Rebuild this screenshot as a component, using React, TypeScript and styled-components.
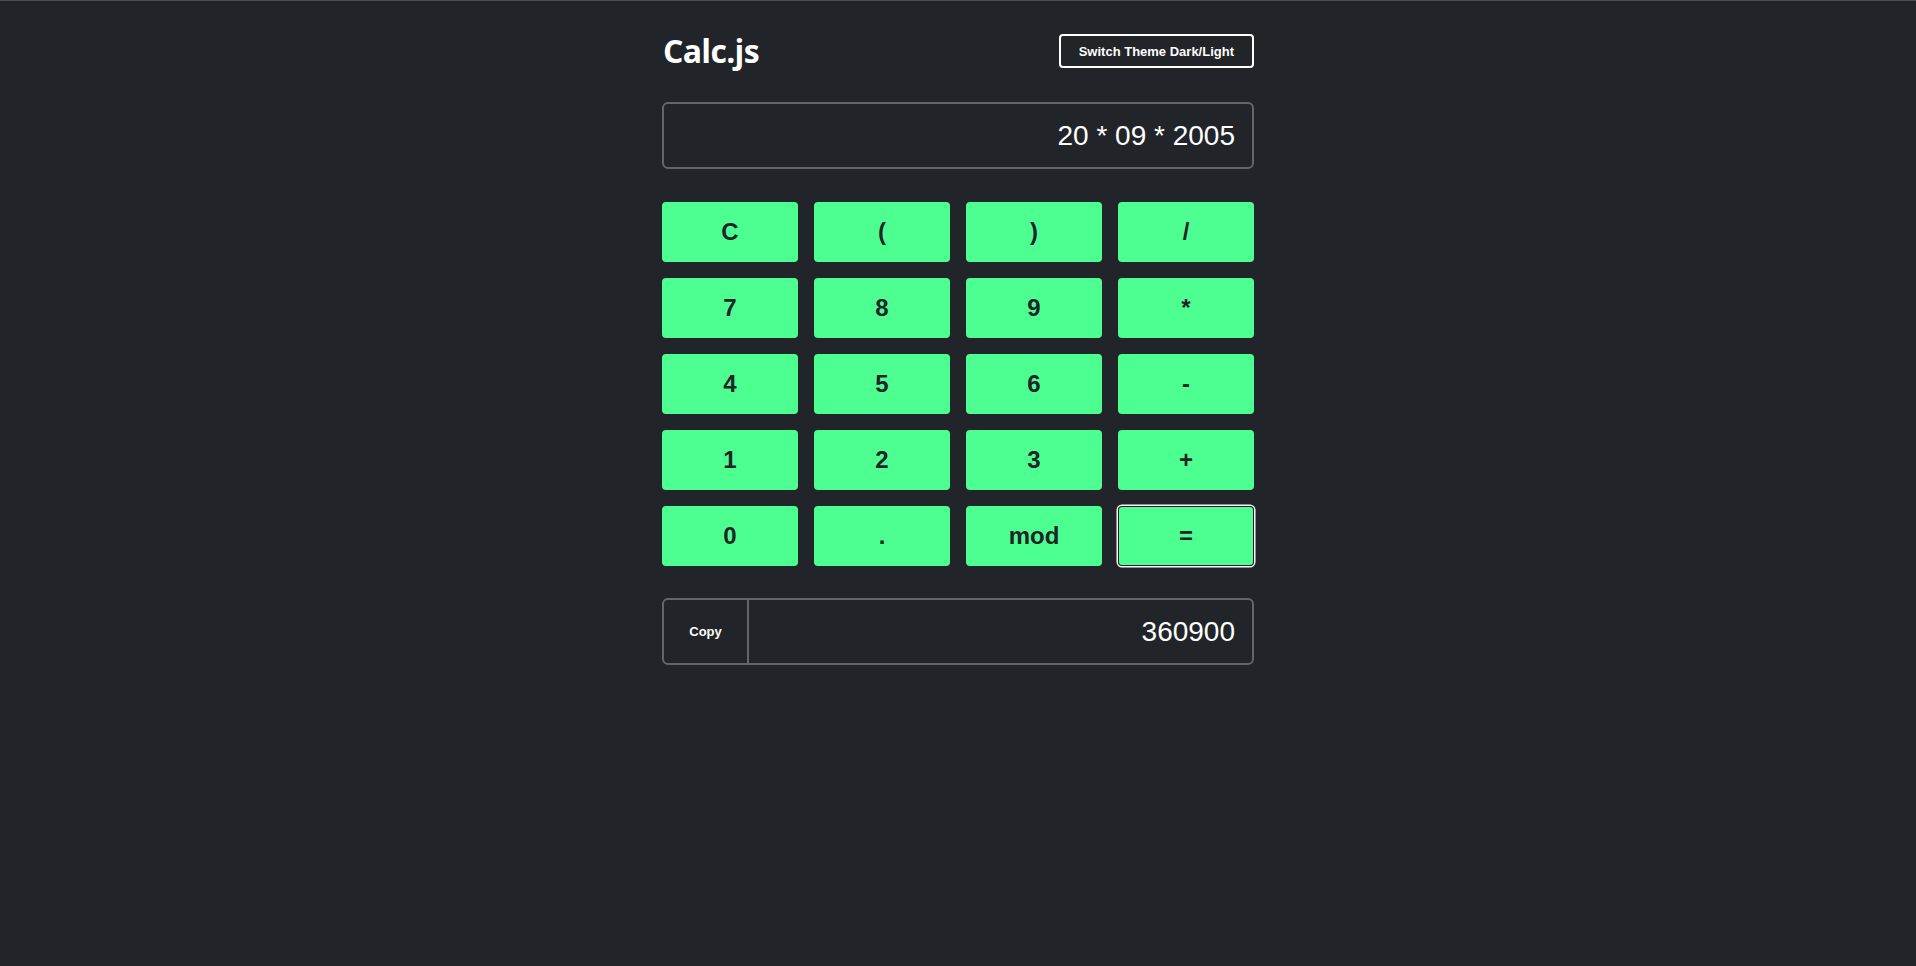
import React from "react";
import styled, { createGlobalStyle } from "styled-components";

const GlobalStyle = createGlobalStyle`
  html, body {
    margin: 0;
    padding: 0;
    background: #212428;
    min-height: 100vh;
  }
  body {
    border-top: 1px solid #4a4d51;
    box-sizing: border-box;
    font-family: "Liberation Sans", Arial, sans-serif;
  }
  * { box-sizing: border-box; }
`;

const Page = styled.main`
  display: flex;
  justify-content: center;
  min-height: calc(100vh - 1px);
`;

const Calculator = styled.div`
  width: 592px;
  padding-top: 33px;
  display: flex;
  flex-direction: column;
`;

const Header = styled.header`
  display: flex;
  justify-content: space-between;
  align-items: center;
  height: 34px;
`;

const Title = styled.h1`
  margin: 0 0 0 1px;
  font-family: "Open Sans", "Noto Sans", sans-serif;
  font-weight: 700;
  font-size: 32px;
  line-height: 34px;
  color: #ffffff;
  letter-spacing: -0.7px;
`;

const ThemeButton = styled.button`
  height: 34px;
  padding: 0 18px;
  border: 2px solid #ffffff;
  border-radius: 4px;
  background: transparent;
  color: #ffffff;
  font-family: "Liberation Sans", Arial, sans-serif;
  font-weight: 700;
  font-size: 13px;
  cursor: pointer;
`;

const Display = styled.div`
  margin-top: 34px;
  height: 67px;
  border: 2px solid #636568;
  border-radius: 6px;
  display: flex;
  align-items: center;
  justify-content: flex-end;
  padding: 0 17px;
  color: #ffffff;
  font-size: 28px;
`;

const Keypad = styled.div`
  margin-top: 33px;
  display: grid;
  grid-template-columns: repeat(4, 136px);
  grid-auto-rows: 60px;
  gap: 16px;
`;

const Key = styled.button<{ $focused?: boolean }>`
  border: none;
  border-radius: 4px;
  background: #4dff91;
  color: #212428;
  font-family: "Liberation Sans", Arial, sans-serif;
  font-weight: 700;
  font-size: 24px;
  cursor: pointer;
  ${(p) =>
    p.$focused
      ? `box-shadow: inset 0 0 0 1px #1c1e22, 0 0 0 1.5px #ffffff;`
      : ""}
`;

const Result = styled.div`
  margin-top: 32px;
  height: 67px;
  border: 2px solid #636568;
  border-radius: 6px;
  display: flex;
  align-items: stretch;
`;

const CopyButton = styled.button`
  width: 85px;
  border: none;
  border-right: 2px solid #636568;
  background: transparent;
  color: #ffffff;
  font-family: "Liberation Sans", Arial, sans-serif;
  font-weight: 700;
  font-size: 13px;
  cursor: pointer;
`;

const ResultValue = styled.div`
  flex: 1;
  display: flex;
  align-items: center;
  justify-content: flex-end;
  padding-right: 17px;
  color: #ffffff;
  font-size: 28px;
`;

const keys = [
  "C", "(", ")", "/",
  "7", "8", "9", "*",
  "4", "5", "6", "-",
  "1", "2", "3", "+",
  "0", ".", "mod", "=",
];

export default function App() {
  return (
    <>
      <GlobalStyle />
      <Page>
        <Calculator>
          <Header>
            <Title>Calc.js</Title>
            <ThemeButton>Switch Theme Dark/Light</ThemeButton>
          </Header>
          <Display>20 * 09 * 2005</Display>
          <Keypad>
            {keys.map((k) => (
              <Key key={k} $focused={k === "="}>
                {k}
              </Key>
            ))}
          </Keypad>
          <Result>
            <CopyButton>Copy</CopyButton>
            <ResultValue>360900</ResultValue>
          </Result>
        </Calculator>
      </Page>
    </>
  );
}
